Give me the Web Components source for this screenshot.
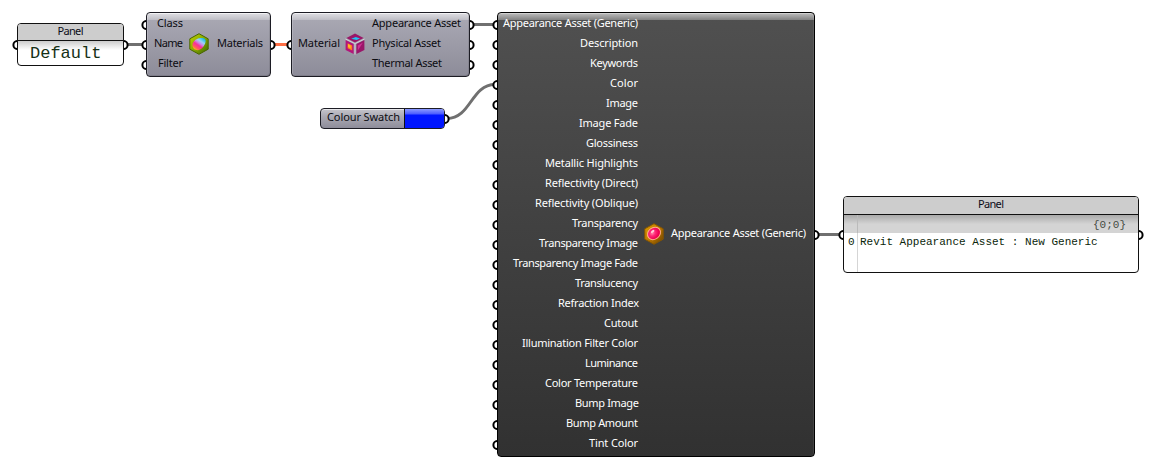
<!DOCTYPE html>
<html lang="en"><head><meta charset="utf-8"><title>Node canvas</title>
<style>html,body{margin:0;background:#fff;overflow:hidden}</style></head><body>
<node-canvas></node-canvas>
<script>
// A text label whose tracking is adjusted so that it fills the width in its "w" attribute.
class NodeLabel extends HTMLElement{
  constructor(){super();this.attachShadow({mode:'open'}).innerHTML=`<style>
  :host{display:block;white-space:nowrap;line-height:16px;height:16px;flex:none}
  span{display:inline-block}</style><span><slot></slot></span>`}
  connectedCallback(){
    const w=+this.getAttribute('w'),s=this.shadowRoot.querySelector('span');
    const n=this.textContent.length,m=s.getBoundingClientRect().width;
    if(w&&n>1){const ls=(w-m)/(n-1);s.style.letterSpacing=ls+'px';s.style.marginRight=-ls+'px'}
  }
}
class NodePort extends HTMLElement{
  constructor(){super();this.attachShadow({mode:'open'}).innerHTML=`<style>
  :host{position:absolute;width:5px;height:10px;top:50%;margin-top:-5px}
  :host([side=in]){left:-6px}
  :host([side=out]){right:-6px;transform:scaleX(-1)}
  svg{display:block}</style><svg width="5" height="10"><circle cx="5.4" cy="5" r="4" fill="#fff" stroke="#000" stroke-width="2"/></svg>`}
}
class NodeIcon extends HTMLElement{
  constructor(){super();this.attachShadow({mode:'open'})}
  connectedCallback(){
    const art={
    query:`<defs><linearGradient id="h" x1="0" y1="0" x2="1" y2="1"><stop stop-color="#c4d500"/><stop offset=".5" stop-color="#85a800"/><stop offset="1" stop-color="#3d6500"/></linearGradient>
      <linearGradient id="b" x1=".9" y1="0" x2=".15" y2="1"><stop offset=".05" stop-color="#12b8e8"/><stop offset=".3" stop-color="#9bd4f4"/><stop offset=".45" stop-color="#c98ae8"/><stop offset=".6" stop-color="#f8309a"/><stop offset=".8" stop-color="#ff5a60"/><stop offset="1" stop-color="#ffd000"/></linearGradient></defs>
      <path d="M10 .7 19.2 5.8V16.2L10 21.3.8 16.2V5.8Z" fill="url(#h)" stroke="#496500" stroke-width="1"/>
      <path d="M3.6 13.6C2.6 9.6 6.8 5.6 11.2 5.1C14.6 4.7 17.2 5.8 16.6 8.8C16 12.4 12.6 17.2 8.6 17.2C5.8 17.2 4.2 15.8 3.6 13.6Z" fill="url(#b)"/>`,
    assets:`<path d="M10 .6 18.6 5 10 9.4 1.4 5Z" fill="#9a1768"/><path d="m6.2 5.8 4.6-1.8 4.2 1.4-3.4 1.7Z" fill="#20c3f3"/>
      <path d="M.6 7 8.6 11.1V21L.6 16.9Z" fill="#b3157a"/><path d="m2.6 10.2 4.6 2.4v5l-4.6-2.4Z" fill="#ff7a20"/><path d="m3 11 2.6 1.5v3L3 14Z" fill="#ffbb25"/>
      <path d="M19.4 7 11.4 11.1V21l8-4.1Z" fill="#9a1669"/><path d="m17.8 9.7-5 2.7v5.2Z" fill="#cf3195"/><path d="M.5 6 10 10.6 19.5 6M10 10.6v11" stroke="#d3ced6" stroke-width="1" fill="none"/>`,
    generic:`<defs><linearGradient id="g" x1="0" y1="0" x2="1" y2="1"><stop stop-color="#dda000"/><stop offset=".5" stop-color="#bf7900"/><stop offset="1" stop-color="#684000"/></linearGradient><radialGradient id="p" cx=".42" cy=".4"><stop stop-color="#ff8cac"/><stop offset=".45" stop-color="#ff2877"/><stop offset="1" stop-color="#ed0051"/></radialGradient></defs>
      <path d="M10 .7 19.2 5.8V16.2L10 21.3.8 16.2V5.8Z" fill="url(#g)" stroke="#865500" stroke-width="1"/><ellipse cx="10" cy="10.4" rx="6.9" ry="5.8" transform="rotate(-38 10 10.4)" fill="url(#p)" stroke="#ffb08c" stroke-width="1"/><ellipse cx="8.7" cy="8.4" rx="2" ry="1" transform="rotate(-38 8.7 8.4)" fill="#ffd1dc"/>`};
    this.shadowRoot.innerHTML=`<style>:host{display:block;flex:none;width:20px;height:22px}svg{display:block}</style><svg width="20" height="22" viewBox="0 0 20 22">${art[this.getAttribute('name')]}</svg>`}
}
class NodeComponent extends HTMLElement{
  constructor(){super();this.attachShadow({mode:'open'})}
  connectedCallback(){
    const rows=(key,side)=>JSON.parse(this.getAttribute(key)).map(([t,w,e])=>`<div class="row"><node-port side="${side}"></node-port><node-label w="${w}" style="margin-right:${e||0}px">${t}</node-label></div>`).join('');
    this.shadowRoot.innerHTML=`<style>
    :host{display:flex;box-sizing:border-box;border:1px solid #1c1c24;border-radius:4px;padding:1px 0;color:#0c0c12;
      background:linear-gradient(#ffffffa0,#ffffff40) top/100% 7px no-repeat,linear-gradient(#abaab5,#8d8c99);box-shadow:inset 0 1px #ffffffa0,inset 1px 0 #ffffff30,inset -1px -1px #00000018}
    :host([dark]){border-color:#000;color:#fff;background:linear-gradient(#ffffffa0,#ffffff48) top/100% 7px no-repeat,linear-gradient(#505050,#313131);box-shadow:inset 0 1px #ffffff50,inset -1px 0 #ffffff16}
    .col{position:relative;display:flex;flex-direction:column;justify-content:center}
    .row{height:20px;display:flex;position:relative}
    .in{width:var(--in)}.in .row{justify-content:flex-end}.out{flex:1}.out .row{padding-left:var(--gap)}
    node-icon{align-self:center;margin:-1px 0 1px var(--pad)}
    </style><div class="col in">${rows('inputs','in')}</div><node-icon name="${this.getAttribute('icon')}"></node-icon><div class="col out">${rows('outputs','out')}</div>`;
  }
}
class TextPanel extends HTMLElement{
  constructor(){super();this.attachShadow({mode:'open'}).innerHTML=`<style>
  :host{display:flex;flex-direction:column;box-sizing:border-box;border:1px solid #111;border-radius:4px;background:#fff}
  .title{height:17px;display:flex;justify-content:center;background:#cdcdcd;border-radius:3px 3px 0 0;border-bottom:1px solid #111;color:#0c0c18}
  .title node-label{margin-top:-1px}
  .body{flex:1;position:relative;background:linear-gradient(#0003,#0000) top/100% 9px no-repeat;border-radius:0 0 3px 3px}
  node-port{top:var(--port);margin:0}
  </style><div class="title"><node-label w="26">Panel</node-label></div><div class="body"><slot></slot></div><node-port side="in"></node-port><node-port side="out"></node-port>`}
}
class PanelList extends HTMLElement{
  constructor(){super();this.attachShadow({mode:'open'}).innerHTML=`<style>
  :host{display:grid;height:100%;grid-template:18px 1fr/13px 1fr;font:11px/16px "Liberation Mono",monospace;color:#0a250a}
  div{white-space:nowrap}.n,.h{border-right:1px solid #d5d5d5}.h,.p{background:#0000002b}.h{border-color:#bbb}
  .p{text-align:right;padding-right:12px;color:#454b42;line-height:20px}.n{padding-left:4px;line-height:18px}.t{padding-left:2px;line-height:18px}
  .h,.n{box-sizing:border-box;width:14px}.p,.t{margin-left:1px}
  </style><div class="h"></div><div class="p">{0;0}</div><div class="n">0</div><div class="t">Revit Appearance Asset : New Generic</div>`}
}
class ColourSwatch extends HTMLElement{
  constructor(){super();this.attachShadow({mode:'open'}).innerHTML=`<style>
  :host{display:flex;box-sizing:border-box;border:1px solid #1c1c24;border-radius:4px;background:linear-gradient(#c6c5cc,#aaa9b3 40%,#8e8d9a);color:#0c0c12;box-shadow:inset 0 1px #fff9}
  .name{width:83px;padding-left:6px;box-sizing:border-box}
  .chip{flex:1;border-left:1px solid #111;background:linear-gradient(#8c9aff,#4b5cff 5px,#0016ff 6px);border-radius:0 3px 3px 0}
  </style><div class="name"><node-label w="73">Colour Swatch</node-label></div><div class="chip"></div><node-port side="out"></node-port>`}
}
class NodeCanvas extends HTMLElement{
  constructor(){super();this.attachShadow({mode:'open'}).innerHTML=`<style>
  :host{display:block;position:relative;width:1158px;height:465px;background:#fff;font:11px/16px "Noto Sans","Open Sans",sans-serif}
  svg{display:block}.node{position:absolute}
  .big{font:17px/24px "Liberation Mono",monospace;color:#163016;padding:1px 0 0 12px;height:23px}
  </style>
  <svg width="1158" height="465" fill="none" stroke="#707070" stroke-width="3">
    <path d="M127 44.5H143M473 24.5H494M447 118.5C471 118.5 471 84.5 495 84.5M818 234.5H840"/><path d="M274 44.5H288" stroke="#ff6f45"/></svg>
  <text-panel class="node" style="left:17px;top:23px;width:107px;height:43px;--port:16px"><div class="big">Default</div></text-panel>
  <node-component class="node" style="left:146px;top:12px;width:125px;height:65px;--in:36px;--pad:6px;--gap:8px" icon="query"
    inputs='[["Class",26],["Name",29],["Filter",25]]' outputs='[["Materials",46]]'></node-component>
  <node-component class="node" style="left:291px;top:12px;width:179px;height:65px;--in:48px;--pad:5px;--gap:7px" icon="assets"
    inputs='[["Material",42]]' outputs='[["Appearance Asset",89],["Physical Asset",69],["Thermal Asset",70]]'></node-component>
  <colour-swatch class="node" style="left:320px;top:108px;width:125px;height:21px"></colour-swatch>
  <node-component dark class="node" style="left:497px;top:12px;width:318px;height:445px;--in:140px;--pad:6px;--gap:7px" icon="generic"
    inputs='[["Appearance Asset (Generic)",135],["Description",58],["Keywords",48],["Color",28],["Image",32],["Image Fade",59],["Glossiness",52],["Metallic Highlights",93],["Reflectivity (Direct)",93],["Reflectivity (Oblique)",103],["Transparency",66],["Transparency Image",99],["Transparency Image Fade",125],["Translucency",63],["Refraction Index",81,-1],["Cutout",34],["Illumination Filter Color",116],["Luminance",53],["Color Temperature",93],["Bump Image",64,-1],["Bump Amount",72],["Tint Color",49]]'
    outputs='[["Appearance Asset (Generic)",135]]'></node-component>
  <text-panel class="node" style="left:843px;top:196px;width:296px;height:77px;--port:33px"><panel-list></panel-list></text-panel>`}
}
customElements.define('node-label',NodeLabel);
customElements.define('node-port',NodePort);
customElements.define('node-icon',NodeIcon);
customElements.define('node-component',NodeComponent);
customElements.define('text-panel',TextPanel);
customElements.define('panel-list',PanelList);
customElements.define('colour-swatch',ColourSwatch);
customElements.define('node-canvas',NodeCanvas);
</script></body></html>
